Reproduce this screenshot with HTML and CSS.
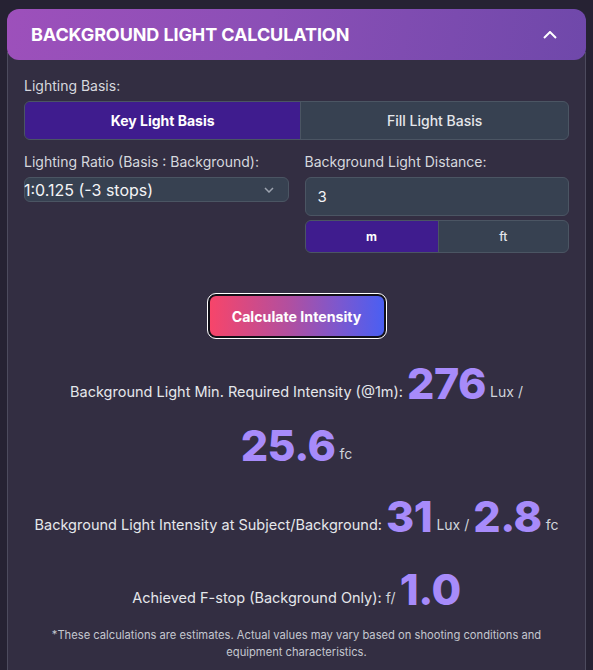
FILE: index.html
```html
<!DOCTYPE html>
<html>
<head>
<meta charset="utf-8">
<link rel="stylesheet" href="styles.css">
</head>
<body>
<div class="card">
  <div class="header">
    <span class="title">BACKGROUND LIGHT CALCULATION</span>
    <svg class="chev-up" width="14" height="8" viewBox="0 0 14 8"><path d="M1 7 L7 1 L13 7" fill="none" stroke="#fff" stroke-width="2"/></svg>
  </div>
  <div class="body">
    <div class="label">Lighting Basis:</div>
    <div class="toggle big">
      <div class="opt active">Key Light Basis</div>
      <div class="opt">Fill Light Basis</div>
    </div>
    <div class="cols">
      <div class="col">
        <div class="label">Lighting Ratio (Basis : Background):</div>
        <div class="select">
          <span>1:0.125 (-3 stops)</span>
          <svg width="10" height="6" viewBox="0 0 10 6"><path d="M1 1 L5 5 L9 1" fill="none" stroke="#9ca3af" stroke-width="1.5"/></svg>
        </div>
      </div>
      <div class="col">
        <div class="label">Background Light Distance:</div>
        <div class="input">3</div>
        <div class="toggle small">
          <div class="opt active">m</div>
          <div class="opt">ft</div>
        </div>
      </div>
    </div>
    <div class="btn-row">
      <button class="calc">Calculate Intensity</button>
    </div>
    <div class="result r1">Background Light Min. Required Intensity (@1m): <span class="grp"><span class="num">276</span> <span class="unit">Lux /</span></span> <span class="grp"><span class="num">25.6</span> <span class="unit">fc</span></span></div>
    <div class="result r2">Background Light Intensity at Subject/Background: <span class="grp"><span class="num">31</span> <span class="unit">Lux /</span></span> <span class="grp"><span class="num">2.8</span> <span class="unit">fc</span></span></div>
    <div class="result r3">Achieved F-stop (Background Only): <span class="grp"><span class="unit">f/</span> <span class="num">1.0</span></span></div>
    <p class="note">*These calculations are estimates. Actual values may vary based on shooting conditions and equipment characteristics.</p>
  </div>
</div>
</body>
</html>
```
FILE: styles.css
```css
html, body {
  margin: 0;
  padding: 0;
  background: #262233;
  font-family: Inter, "Noto Sans", sans-serif;
  color: #e5e7eb;
}
.card {
  margin: 9px 7px 0 7px;
}
.header {
  height: 51px;
  border-radius: 12px;
  background: linear-gradient(100deg, #9d50bb 0%, #8b4fb6 45%, #6f48aa 100%);
  display: flex;
  align-items: center;
  justify-content: space-between;
  padding: 0 29px 0 24px;
  position: relative;
  z-index: 1;
}
.title {
  color: #fff;
  font-weight: 700;
  font-size: 18px;
  letter-spacing: -0.1px;
}
.body {
  margin-top: -8px;
  padding: 24px 16px 10px 16px;
  background: #332e42;
  border-left: 1px solid #4d4b5e;
  border-right: 1px solid #4d4b5e;
  min-height: 600px;
}
.label {
  font-size: 14px;
  line-height: 20px;
  color: #d6d8de;
  margin-bottom: 5px;
}
.toggle {
  display: flex;
  border: 1px solid #4b5563;
  border-radius: 6px;
  overflow: hidden;
  background: #374151;
}
.toggle .opt {
  flex: 1 1 auto;
  display: flex;
  align-items: center;
  justify-content: center;
  color: #e5e7eb;
  font-weight: 500;
}
.toggle .opt.active {
  background: #3f1c8e;
  color: #fff;
  font-weight: 700;
}
.toggle .opt + .opt {
  border-left: 1px solid #4b5563;
}
.toggle.big {
  height: 37px;
  font-size: 14px;
  margin-bottom: 12px;
}
.toggle.small {
  height: 31px;
  font-size: 12px;
  margin-top: 4px;
}
.cols {
  display: flex;
  gap: 16px;
}
.col {
  flex: 1;
}
.select {
  height: 25px;
  box-sizing: border-box;
  border: 1px solid #4b5563;
  border-radius: 6px;
  background: #374151;
  display: flex;
  align-items: center;
  justify-content: space-between;
  padding: 0 14px 0 0;
  font-size: 16px;
  color: #f3f4f6;
}
.select span { margin-left: -1px; }
.input {
  height: 39px;
  box-sizing: border-box;
  border: 1px solid #4b5563;
  border-radius: 6px;
  background: #374151;
  display: flex;
  align-items: center;
  padding-left: 12px;
  font-size: 15px;
  color: #f3f4f6;
}
.btn-row {
  display: flex;
  justify-content: center;
  margin-top: 41px;
}
.calc {
  width: 178px;
  height: 44px;
  border: 2px solid #121018;
  outline: 1.5px solid #fff;
  border-radius: 8px;
  background: linear-gradient(90deg, #f7456a 0%, #b24f9f 45%, #7a58d0 75%, #4a5ff2 100%);
  color: #fff;
  font-family: Inter, sans-serif;
  font-weight: 700;
  font-size: 14.2px;
  padding: 0;
}
.result {
  text-align: center;
  font-size: 14.5px;
  color: #e5e7eb;
  line-height: 62px;
}
.grp { white-space: nowrap; }
.r1 { margin-top: 23px; }
.r2 { margin-top: 9px; }
.r3 { margin-top: 11px; }
.num {
  font-size: 43px;
  line-height: 1;
  font-weight: 800;
  color: #a78bfa;
  letter-spacing: -0.5px;
  vertical-align: -2px;
}
.unit {
  font-size: 14px;
  color: #d1d5db;
}
.note {
  margin: -2px 0 0 0;
  text-align: center;
  font-size: 11.2px;
  line-height: 17px;
  color: #c4c7cf;
}
```
